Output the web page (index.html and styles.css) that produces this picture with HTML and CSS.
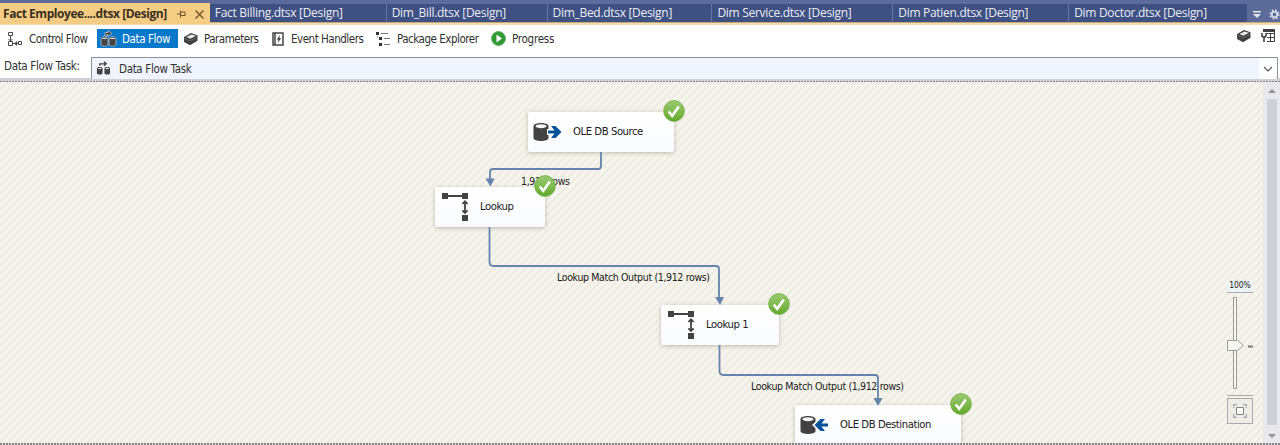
FILE: index.html
```html
<!DOCTYPE html>
<html lang="en">
<head>
<meta charset="utf-8">
<title>Data Flow Designer</title>
<link rel="stylesheet" href="styles.css">
</head>
<body>
<svg class="defs" width="0" height="0">
  <defs>
    <linearGradient id="green" x1="0" y1="0" x2="0" y2="1"><stop offset="0" stop-color="#9aca72"/><stop offset="0.5" stop-color="#80bb50"/><stop offset="1" stop-color="#62a82c"/></linearGradient>
    <symbol id="check" viewBox="0 0 22 22"><circle cx="11" cy="11" r="10.4" fill="url(#green)" stroke="#6fae41" stroke-width=".8"/><path d="M5.7 11.5 9.2 15.8 15.8 6.5" fill="none" stroke="#fff" stroke-width="2.6"/></symbol>
    <symbol id="cube" viewBox="0 0 16 16"><path d="M1 6 8 2l6.5 2.2v5.5L7 14.2 1 11z" fill="#414141"/><path d="M3.2 6 8.6 3.5 13 4.8 7.3 7.8z" fill="#ddd"/><path d="M6 5.5 9 4.3l2 .7-3.5 1.5z" fill="#fff"/><path d="M1 7.3 7 10l7.5-4" fill="none" stroke="#777" stroke-width=".7"/></symbol>
    <symbol id="flow" viewBox="0 0 16 16"><g fill="#424242"><path d="M1 8c0-2 6-2 6 0v5c0 2-6 2-6 0zM9 8c0-2 6-2 6 0v5c0 2-6 2-6 0z"/></g><ellipse cx="4" cy="8" rx="2" ry=".8" fill="#ddd"/><ellipse cx="12" cy="8" rx="2" ry=".8" fill="#ddd"/><path d="M4 5V3h6M8.5.8 11 3 8.5 5.2" fill="none" stroke="#424242" stroke-width="1.4"/></symbol>
    <symbol id="lookup" viewBox="0 0 28 30"><path d="M3 4h22" stroke="#424242" stroke-width="2"/><g fill="#424242"><path d="M1 1h6v6H1zM21 1h6v6h-6zM21 23h6v6h-6z"/></g><path d="M24 10v10M21.4 12 24 9.3 26.6 12M21.4 18.300 24 21 26.600 18.300" fill="none" stroke="#424242" stroke-width="1.800"/></symbol>
    <symbol id="cylinder" viewBox="0 0 16 20"><path d="M.5 4c0-4 15-4 15 0v12c0 4-15 4-15 0z" fill="#424242"/><ellipse cx="8" cy="4.200" rx="5.500" ry="2" fill="#f7f7f7"/></symbol>
  </defs>
</svg>
<main class="window">
  <nav class="tabs">
    <div class="tab tab-active"><span class="tab-title">Fact Employee....dtsx [Design]</span>
      <svg class="pin" width="9" height="8" viewBox="0 0 9 8"><path d="M0 4h3M3.500 0.500v7M4 2h4v4M4 5.500h4" fill="none" stroke="#6b5128"/></svg>
      <svg class="close" width="9" height="9" viewBox="0 0 9 9"><path d="m.5.5 8 8m0-8-8 8" stroke="#6b5128" stroke-width="1.300"/></svg>
    </div>
    <div class="tab t1">Fact Billing.dtsx [Design]</div>
    <div class="tab t2">Dim_Bill.dtsx [Design]</div>
    <div class="tab t3">Dim_Bed.dtsx [Design]</div>
    <div class="tab t4">Dim Service.dtsx [Design]</div>
    <div class="tab t5">Dim Patien.dtsx [Design]</div>
    <div class="tab t6">Dim Doctor.dtsx [Design]</div>
    <div class="tab-tools">
      <svg width="8" height="8" viewBox="0 0 8 8"><path d="M0 0h8v1.500H0zM0 3h8L4 7z" fill="#e4e8f4"/></svg>
      <svg class="gear" width="11" height="11" viewBox="0 0 11 11"><circle cx="5.500" cy="5.500" r="2.700" fill="none" stroke="#e4e8f4" stroke-width="1.500"/><circle cx="5.500" cy="5.500" r="4.300" fill="none" stroke="#e4e8f4" stroke-width="1.500" stroke-dasharray="1.700 1.680"/></svg>
    </div>
  </nav>
  <header class="toolbar">
    <div class="tool control"><svg width="15" height="16" viewBox="0 0 15 16"><g fill="none" stroke="#4a4a4a"><path d="M.5 1.500h4v3h-4zM.5 10.500h4v4h-4zM10.500 10.500h3v3h-3zM2.500 5v5"/><path d="M.5 8 2.500 10l2-2M5 12.500h5"/></g><path d="m9 10-3 2.500L9 15z" fill="#4a4a4a"/></svg><span>Control Flow</span></div>
    <div class="tool selected"><svg width="17" height="17" viewBox="0 0 17 17"><path d="M1 9c0-3 7-3 7 0v5c0 3-7 3-7 0zM9 9c0-3 7-3 7 0v5c0 3-7 3-7 0z" fill="#444" stroke="#ccc" stroke-width=".7"/><path d="M2.500 8.500h4M10.500 8.500h4" stroke="#eee"/><path d="M5 6V2.500h3V.5l4 3-4 3v-2H7V6z" fill="#444" stroke="#ddd" stroke-width=".6"/></svg><span>Data Flow</span></div>
    <div class="tool params"><svg width="16" height="16"><use href="#cube"/></svg><span>Parameters</span></div>
    <div class="tool events"><svg width="12" height="14" viewBox="0 0 12 14"><path d="M1 1h10v12H1zM3 1v12" fill="none" stroke="#444" stroke-width="1.500"/><path d="M8 2.800 4.800 7.400h1.800L5.500 11l3.700-4.800H7.200z" fill="#333"/></svg><span>Event Handlers</span></div>
    <div class="tool explorer"><svg width="15" height="15" viewBox="0 0 15 15"><path d="M0 1h3v3H0zM3 6h3v3H3zM3 12h3v3H3z" fill="#333"/><path d="M5 2.500h7M8 7.500h6M8 13.500h6" stroke="#777"/><path d="M1.500 5v2" stroke="#aaa"/></svg><span>Package Explorer</span></div>
    <div class="tool progress"><svg width="15" height="15" viewBox="0 0 15 15"><circle cx="7.500" cy="7.500" r="6.900" fill="#309936" stroke="#54aa58"/><path d="m5.500 3.500 5.500 4-5.500 4z" fill="#fff"/></svg><span>Progress</span></div>
    <div class="right-tools"><svg width="16" height="16"><use href="#cube"/></svg><svg class="grid-tool" width="14" height="14" viewBox="0 0 14 14"><path d="M2 1.500h11.500v11H6M6 4.500h7M6 8.500h7M9.500 4v8" fill="none" stroke="#424242"/><path d="M2 0h12v3H2z" fill="#424242"/><path d="M1 4v3l2 1.500V13M5 4v3L3 8.500" fill="none" stroke="#424242" stroke-width="1.600"/></svg></div>
  </header>
  <section class="task"><label>Data Flow Task:</label><div class="select"><svg width="15" height="15"><use href="#flow"/></svg><span>Data Flow Task</span><div class="select-arrow"><svg width="10" height="6" viewBox="0 0 10 6"><path d="m1 1 4 4 4-4" fill="none" stroke="#555" stroke-width="1.200"/></svg></div></div></section>
  <section class="designer">
    <svg class="texture" width="1264" height="362"><defs><pattern id="stripes" width="8" height="8" patternUnits="userSpaceOnUse"><path d="M-2 2 2-2M0 8 8 0M6 10l4-4" stroke="#ebe9df" stroke-width="1.300"/></pattern></defs><rect width="1264" height="362" fill="url(#stripes)"/></svg>
    <div class="node source"><svg class="data-icon" width="29" height="22" viewBox="0 0 29 22"><use href="#cylinder" width="16" height="20" x="0" y="1"/><path d="M14 8h6V3l9 8-9 8v-5h-6z" fill="#fff"/><path d="M15 9.500h6.500L18 5h4.500l6 6-6 6H18l3.500-4.500H15z" fill="#07509b"/></svg><span>OLE DB Source</span><svg class="badge" width="22" height="22"><use href="#check"/></svg></div>
    <div class="node lookup"><svg class="lookup-icon" width="28" height="30"><use href="#lookup"/></svg><span>Lookup</span><svg class="badge" width="22" height="22"><use href="#check"/></svg></div>
    <div class="node lookup1"><svg class="lookup-icon" width="28" height="30"><use href="#lookup"/></svg><span>Lookup 1</span><svg class="badge" width="22" height="22"><use href="#check"/></svg></div>
    <div class="node destination"><svg class="data-icon" width="29" height="22" viewBox="0 0 29 22"><use href="#cylinder" width="16" height="20" x="0" y="1"/><path d="m12 11 9-8v5h7v6h-7v5z" fill="#fff"/><path d="M28 9.500h-6.500L25 5h-4.500l-6 6 6 6H25l-3.500-4.500H28z" fill="#07509b"/></svg><span>OLE DB Destination</span><svg class="badge" width="22" height="22"><use href="#check"/></svg></div>
    <span class="flow-label l1">1,912 rows</span>
    <span class="flow-label l2">Lookup Match Output (1,912 rows)</span>
    <span class="flow-label l3">Lookup Match Output (1,912 rows)</span>
    <svg class="connectors" width="1264" height="362" viewBox="0 82 1264 362"><g fill="none" stroke="#6483ad" stroke-width="1.800"><path d="M601 152v14q0 3-3 3H493q-3 0-3 3v9M489.500 227v35q0 4 4 4H716q3 0 3 3v30M719.500 345v26q0 4 4 4H875q3 0 3 3v22"/></g><path d="M485.500 178.500h9l-4 8zM715 297h9l-4 8zM873.500 398h9l-4.500 8z" fill="#6483ad"/></svg>
    <div class="zoom"><div class="zoom-value">100%</div><svg width="26" height="102" viewBox="0 0 26 102"><path d="M6.500 4.500h3v91h-3z" fill="#f7f5ef" stroke="#9b9b98"/><path d="M.5 47.500h10l6 5-6 5H.5z" fill="#f8f8f6" stroke="#9b9b98"/><path d="M21 53.500h5" stroke="#777" stroke-width="2"/></svg><div class="fit"><svg width="16" height="16" viewBox="0 0 16 16"><path d="M4.500 4.500h7v7h-7z" fill="#fff" stroke="#858585"/><path d="M1.500 5V1.500H5M11 1.500h3.500V5M14.500 11v3.500H11M5 14.500H1.500V11M1.500 1.500l2 2M14.500 1.500l-2 2M1.500 14.500l2-2M14.500 14.500l-2-2" fill="none" stroke="#aaa"/></svg></div></div>
    <div class="scrollbar"><i class="up"></i><b></b><i class="down"></i></div>
  </section>
</main>
</body>
</html>
```
FILE: styles.css
```css
* { box-sizing: border-box; }
body { margin: 0; overflow: hidden; color: #303030; font: 11.5px/16px "DejaVu Sans Condensed", "DejaVu Sans", sans-serif; font-stretch: condensed; letter-spacing: -.48px; }
svg { display: block; flex: none; }
.defs { position: absolute; }
.window { width: 1280px; height: 445px; background: #fff; display: flex; flex-direction: column; }
.tabs { height: 25px; padding-top: 4px; display: flex; flex: none; background: linear-gradient(#5c6b99 0 22px, #c7a978 22px 23px, #f5dcb0 23px 25px); font: 12px/18px "Open Sans", sans-serif; font-stretch: normal; color: #e9edf7; letter-spacing: -.3px; }
.tab { height: 18px; padding-left: 5px; background: #3f5082; border-right: 1px solid #6675a2; white-space: nowrap; }
.tab-active { width: 210px; height: 21px; margin-top: -1px; padding: 1px 5px 0 3px; display: flex; align-items: center; background: #f5cc84; color: #3a3020; font-weight: bold; border: 0; }
.tab-title { width: 174px; letter-spacing: -.45px; }
.close { margin-left: 9px; }
.t1 { width: 177px; }
.t2 { width: 161px; }
.t3 { width: 165px; }
.t4 { width: 181px; }
.t5 { width: 176px; }
.t6 { width: 178px; border-right: 0; }
.tab-tools { display: flex; gap: 8px; align-items: center; padding-left: 6px; }
.toolbar { height: 32px; display: flex; flex: none; }
.tool { height: 19px; margin-top: 4px; display: flex; flex: none; align-items: center; white-space: nowrap; }
.tool svg { margin-right: 6px; }
.control { width: 97px; padding-left: 8px; }
.selected { width: 81px; background: #0878cb; color: #fff; padding-left: 3px; letter-spacing: -.4px; }
.selected svg { margin-right: 5px; }
.params { width: 89px; margin-left: 5px; }
.params svg { margin-right: 5px; }
.events { width: 104px; }
.events svg { margin-right: 7px; }
.explorer { width: 115px; }
.progress { letter-spacing: -.25px; }
.right-tools { display: flex; gap: 9px; margin: 3px 5px 0 auto; }
.grid-tool { margin-top: 1px; }
.task { height: 24px; display: flex; flex: none; padding-right: 2px; letter-spacing: -.33px; background: linear-gradient(#fff 0 21px, #ced1d8 21px); }
.task label { width: 91px; padding: 1px 0 0 4px; }
.select { flex: 1; height: 22px; border: 1px solid #8c929e; border-bottom: 0; background: #f0f4fc; display: flex; align-items: center; padding-left: 4px; }
.select span { margin-left: 8px; }
.select-arrow { width: 18px; height: 21px; margin-left: auto; background: #fff; display: grid; place-items: center; }
.designer { position: relative; height: 364px; flex: none; overflow: hidden; background: #f5f3eb; color: #202020; border-top: 1px solid #aaa; border-bottom: 2px solid; border-image: repeating-linear-gradient(90deg, #858585 0 2px, #e0e0e0 2px 3px) 1 0 2 0; }
.texture, .connectors { position: absolute; left: 0; top: 0; }
.node { position: absolute; height: 40px; background: linear-gradient(#fff, #fafbfe); border-radius: 2px; display: flex; align-items: center; box-shadow: 0 1px 4px rgba(60, 55, 40, .3); white-space: nowrap; font-size: 11.2px; letter-spacing: -.43px; }
.source { left: 528px; top: 30px; width: 146px; }
.lookup { left: 435px; top: 105px; width: 110px; }
.lookup1 { left: 661px; top: 223px; width: 118px; }
.destination { left: 795px; top: 323px; width: 166px; }
.data-icon { margin-left: 5px; }
.data-icon + span { margin-left: 11px; }
.lookup-icon { margin-left: 6px; }
.lookup-icon + span { margin-left: 11px; }
.badge { position: absolute; right: -11px; top: -12px; z-index: 3; }
.flow-label { position: absolute; font-size: 10.5px; white-space: nowrap; letter-spacing: -.35px; }
.l1 { left: 521px; top: 91px; }
.l2 { left: 557px; top: 187px; }
.l3 { left: 751px; top: 296px; }
.zoom { position: absolute; left: 1227px; top: 197px; width: 26px; }
.zoom-value { height: 14px; background: #edf2f7; border-bottom: 1px solid #aaa; font-size: 8.5px; line-height: 13px; text-align: center; letter-spacing: -.1px; }
.fit { padding-top: 2px; border-top: 1px solid #aaa; }
.fit svg { box-sizing: content-box; border: 1px solid #aaa; padding: 4px; background: #eeede7; }
.scrollbar { position: absolute; right: 0; top: 0; width: 17px; height: 362px; padding: 7px 4px; background: #e9e9ed; display: flex; flex-direction: column; align-items: center; }
.scrollbar b { width: 10px; height: 326px; margin-top: 6px; flex: none; background: #ced0d9; }
.up, .down { border: 4px solid transparent; border-top: 0; border-bottom-color: #929298; }
.down { margin-top: 9px; border-top: 4px solid #929298; border-bottom: 0; }
```
